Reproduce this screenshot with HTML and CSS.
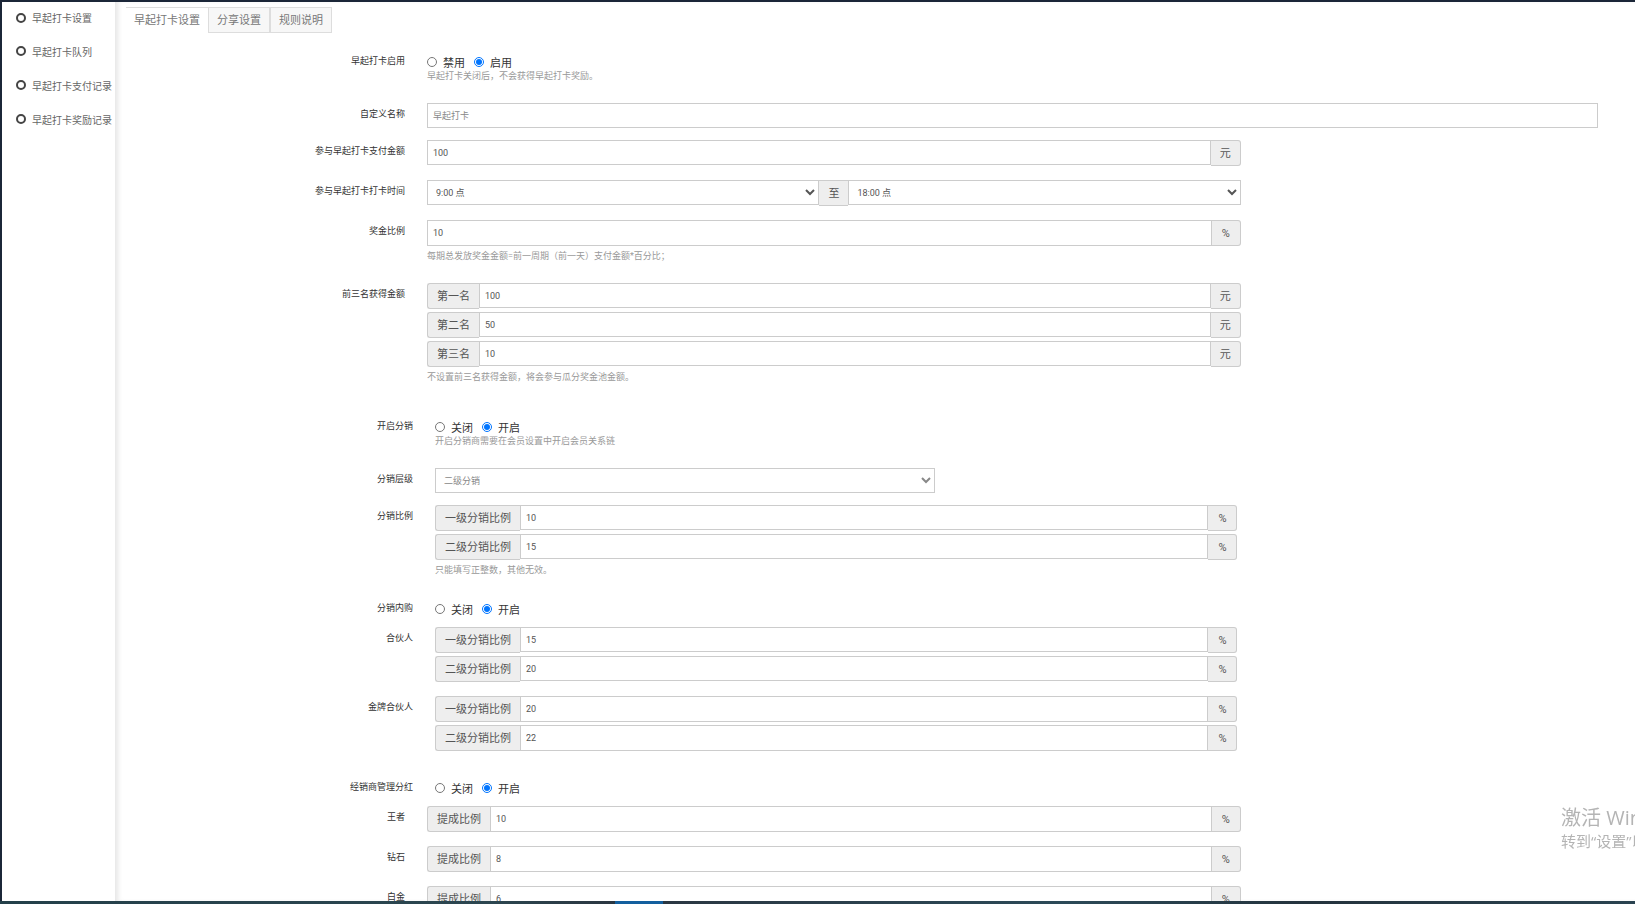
FILE: index.html
```html
<!DOCTYPE html>
<html lang="zh-CN">
<head>
<meta charset="utf-8">
<title>早起打卡设置</title>
<link rel="stylesheet" href="styles.css">
</head>
<body>
<div class="screen">
  <nav class="sidebar">
    <a href="#"><span class="ring"></span>早起打卡设置</a>
    <a href="#"><span class="ring"></span>早起打卡队列</a>
    <a href="#"><span class="ring"></span>早起打卡支付记录</a>
    <a href="#"><span class="ring"></span>早起打卡奖励记录</a>
  </nav>
  <main class="main">
    <div class="tabs">
      <a class="tab active" href="#">早起打卡设置</a>
      <a class="tab" href="#">分享设置</a>
      <a class="tab" href="#">规则说明</a>
    </div>
    <form class="form">
      <section class="outer">
        <div class="row has-help">
          <span class="name" id="l-enable">早起打卡启用</span>
          <div class="control">
            <div class="radios" role="radiogroup" aria-labelledby="l-enable">
              <label><input type="radio" name="enable">禁用</label>
              <label><input type="radio" name="enable" checked>启用</label>
            </div>
            <p class="help">早起打卡关闭后，不会获得早起打卡奖励。</p>
          </div>
        </div>
        <div class="row single">
          <label class="name" for="title">自定义名称</label>
          <div class="control"><input class="field pale" id="title" type="text" value="早起打卡"></div>
        </div>
        <div class="row">
          <label class="name" for="pay">参与早起打卡支付金额</label>
          <div class="control">
            <div class="group"><input class="field" id="pay" type="text" value="100"><span class="addon end">元</span></div>
          </div>
        </div>
        <div class="row">
          <label class="name" for="from">参与早起打卡打卡时间</label>
          <div class="control">
            <div class="group">
              <select class="field" id="from"><option>9:00 点</option></select>
              <label class="addon middle" for="to">至</label>
              <select class="field" id="to"><option>18:00 点</option></select>
            </div>
          </div>
        </div>
        <div class="row has-help">
          <label class="name" for="bonus">奖金比例</label>
          <div class="control">
            <div class="group tall"><input class="field" id="bonus" type="text" value="10"><span class="addon end">%</span></div>
            <p class="help below">每期总发放奖金金额=前一周期（前一天）支付金额*百分比；</p>
          </div>
        </div>
        <div class="row has-help">
          <span class="name">前三名获得金额</span>
          <div class="control">
            <div class="group"><label class="addon start" for="p1">第一名</label><input class="field" id="p1" type="text" value="100"><span class="addon end">元</span></div>
            <div class="group"><label class="addon start" for="p2">第二名</label><input class="field" id="p2" type="text" value="50"><span class="addon end">元</span></div>
            <div class="group"><label class="addon start" for="p3">第三名</label><input class="field" id="p3" type="text" value="10"><span class="addon end">元</span></div>
            <p class="help below">不设置前三名获得金额，将会参与瓜分奖金池金额。</p>
          </div>
        </div>
      </section>

      <section class="inner">
        <div class="row has-help">
          <span class="name" id="l-dist">开启分销</span>
          <div class="control">
            <div class="radios" role="radiogroup" aria-labelledby="l-dist">
              <label><input type="radio" name="dist">关闭</label>
              <label><input type="radio" name="dist" checked>开启</label>
            </div>
            <p class="help">开启分销商需要在会员设置中开启会员关系链</p>
          </div>
        </div>
        <div class="row single">
          <label class="name" for="level">分销层级</label>
          <div class="control"><select class="field pale level" id="level"><option>二级分销</option></select></div>
        </div>
        <div class="row has-help">
          <span class="name">分销比例</span>
          <div class="control">
            <div class="group"><label class="addon start" for="r1">一级分销比例</label><input class="field" id="r1" type="text" value="10"><span class="addon end">%</span></div>
            <div class="group"><label class="addon start" for="r2">二级分销比例</label><input class="field" id="r2" type="text" value="15"><span class="addon end">%</span></div>
            <p class="help below">只能填写正整数，其他无效。</p>
          </div>
        </div>
        <div class="row tight">
          <span class="name" id="l-buy">分销内购</span>
          <div class="control">
            <div class="radios" role="radiogroup" aria-labelledby="l-buy">
              <label><input type="radio" name="buy">关闭</label>
              <label><input type="radio" name="buy" checked>开启</label>
            </div>
          </div>
        </div>
        <div class="row">
          <span class="name">合伙人</span>
          <div class="control">
            <div class="group"><label class="addon start" for="h1">一级分销比例</label><input class="field" id="h1" type="text" value="15"><span class="addon end">%</span></div>
            <div class="group"><label class="addon start" for="h2">二级分销比例</label><input class="field" id="h2" type="text" value="20"><span class="addon end">%</span></div>
          </div>
        </div>
        <div class="row">
          <span class="name">金牌合伙人</span>
          <div class="control">
            <div class="group tall"><label class="addon start" for="g1">一级分销比例</label><input class="field" id="g1" type="text" value="20"><span class="addon end">%</span></div>
            <div class="group tall"><label class="addon start" for="g2">二级分销比例</label><input class="field" id="g2" type="text" value="22"><span class="addon end">%</span></div>
          </div>
        </div>
      </section>

      <section class="inner joined">
        <div class="row tight">
          <span class="name" id="l-share">经销商管理分红</span>
          <div class="control">
            <div class="radios" role="radiogroup" aria-labelledby="l-share">
              <label><input type="radio" name="share">关闭</label>
              <label><input type="radio" name="share" checked>开启</label>
            </div>
          </div>
        </div>
      </section>

      <section class="outer">
        <div class="row">
          <label class="name" for="k1">王者</label>
          <div class="control">
            <div class="group tall"><label class="addon start" for="k1">提成比例</label><input class="field" id="k1" type="text" value="10"><span class="addon end">%</span></div>
          </div>
        </div>
        <div class="row">
          <label class="name" for="k2">钻石</label>
          <div class="control">
            <div class="group tall"><label class="addon start" for="k2">提成比例</label><input class="field" id="k2" type="text" value="8"><span class="addon end">%</span></div>
          </div>
        </div>
        <div class="row">
          <label class="name" for="k3">白金</label>
          <div class="control">
            <div class="group tall"><label class="addon start" for="k3">提成比例</label><input class="field" id="k3" type="text" value="6"><span class="addon end">%</span></div>
          </div>
        </div>
      </section>
    </form>
  </main>
</div>
<div class="taskbar"><span class="task"></span></div>
<aside class="activate">
  <p class="activate-title">激活 Windows</p>
  <p class="activate-text">转到“设置”以激活 Windows。</p>
</aside>
</body>
</html>
```
FILE: styles.css
```css
* {
  box-sizing: border-box;
}

body {
  margin: 0;
  height: 100vh;
  overflow: hidden;
  display: flex;
  flex-direction: column;
  background: #fff;
  color: #333;
  font-family: Roboto, "Noto Sans CJK SC", sans-serif;
  font-size: 11px;
}

p {
  margin: 0;
}

.screen {
  flex: 1;
  min-height: 0;
  display: flex;
  overflow: hidden;
  border-top: 2px solid #1b2638;
  border-left: 2px solid #1b2638;
}

.sidebar {
  flex: 0 0 113px;
  overflow: hidden;
}

.sidebar a {
  display: flex;
  align-items: center;
  gap: 6px;
  height: 34px;
  padding-left: 14px;
  color: #666;
  font-size: 10px;
  text-decoration: none;
  white-space: nowrap;
}

.sidebar a:first-child {
  height: 31px;
}

.sidebar a + a {
  padding-top: 2px;
}

.ring {
  flex: none;
  width: 10px;
  height: 10px;
  border: 2px solid #444;
  border-radius: 50%;
}

.main {
  flex: 1;
  min-width: 0;
  overflow: hidden;
  box-shadow: inset 5px 0 5px -2px #e6e6e6;
}

.tabs {
  display: flex;
  padding: 5px 0 0 11px;
}

.tab {
  height: 26px;
  padding: 0 8px;
  border: 1px solid #ddd;
  background: #f7f7f7;
  color: #777;
  line-height: 26px;
  text-decoration: none;
}

.tab.active {
  border-width: 1px 0 0;
  background: #fff;
}

.form {
  padding: 17px 37px 0 5px;
}

.outer,
.inner {
  display: flow-root;
  margin-bottom: 11px;
}

.inner.joined {
  margin-bottom: 0;
}

.row {
  display: flex;
  align-items: flex-start;
  gap: 22px;
  margin-bottom: 14px;
}

.row.has-help {
  margin-bottom: 21px;
}

.row.single {
  margin-bottom: 12px;
}

.row.tight {
  margin-bottom: 10px;
}

.name {
  flex: 0 0 285px;
  padding-top: 2px;
  font-size: 9px;
  line-height: 18px;
  text-align: right;
}

.inner .name {
  flex-basis: 293px;
}

.control {
  flex: 1;
  min-width: 0;
}

.radios {
  display: flex;
  gap: 9px;
  padding: 4px 0 1px;
}

.radios label {
  display: flex;
  align-items: center;
  gap: 6px;
  height: 15px;
}

.radios input {
  width: 10px;
  height: 10px;
  margin: 0;
}

.help {
  color: #999;
  font-size: 9px;
  line-height: 12px;
}

.help.below {
  margin-top: 4px;
}

.field {
  display: block;
  flex: 1;
  width: 100%;
  min-width: 0;
  height: 25px;
  padding: 0 5px;
  border: 1px solid #ccc;
  border-radius: 0;
  background: #fff;
  color: #555;
  font-family: inherit;
  font-size: 9px;
}

.field.pale {
  color: #888;
}

select.field {
  padding: 0 4px;
}

.level {
  width: 43%;
}

.group {
  display: flex;
  align-items: flex-start;
  width: 69%;
}

.outer .group {
  width: 69.5%;
}

.group + .group {
  margin-top: 3px;
}

.group.tall .field {
  height: 26px;
}

.addon {
  flex: none;
  min-width: 29px;
  height: 26px;
  padding: 0 9px;
  border: 1px solid #ccc;
  background: #eee;
  color: #555;
  line-height: 25px;
  text-align: center;
}

.addon.start {
  border-right: 0;
  border-radius: 3px 0 0 3px;
}

.addon.end {
  border-left: 0;
  border-radius: 0 3px 3px 0;
}

.addon.middle {
  border-width: 1px 0;
}

.taskbar {
  flex: 0 0 3px;
  display: flex;
  background: linear-gradient(90deg, #24404a, #2c4650 30%, #2a3540 38%, #2c4a58 65%, #24333d 80%, #2a4350);
}

.task {
  width: 48px;
  margin-left: 615px;
  background: #135f9e;
}

.activate {
  position: fixed;
  right: 0;
  bottom: 52px;
  width: 74px;
  overflow: hidden;
  color: #b4b4b4;
  font-family: "Open Sans", "Noto Sans CJK SC", sans-serif;
  white-space: nowrap;
}

.activate-title {
  font-size: 20px;
  line-height: 24px;
}

.activate-text {
  font-size: 15px;
  line-height: 22px;
}
```
